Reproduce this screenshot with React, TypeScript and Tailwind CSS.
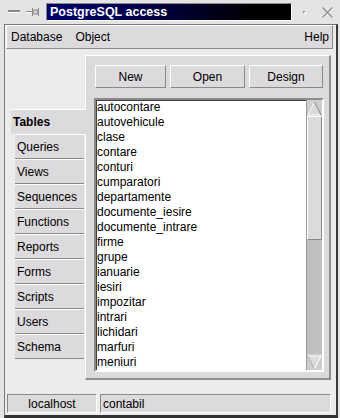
import React from "react";

const tables = [
  "autocontare",
  "autovehicule",
  "clase",
  "contare",
  "conturi",
  "cumparatori",
  "departamente",
  "documente_iesire",
  "documente_intrare",
  "firme",
  "grupe",
  "ianuarie",
  "iesiri",
  "impozitar",
  "intrari",
  "lichidari",
  "marfuri",
  "meniuri",
];

const tabs = ["Queries", "Views", "Sequences", "Functions", "Reports", "Forms", "Scripts", "Users", "Schema"];

const raised = "bg-[#dcdadc] border border-t-white border-l-white border-b-[#8a8a8a] border-r-[#8a8a8a]";
const sunken = "bg-[#dcdadc] border border-t-[#8a8a8a] border-l-[#8a8a8a] border-b-white border-r-white";

const App = () => {
  return (
    <div className="w-[340px] h-[418px] bg-[#e4e4e4] flex flex-col overflow-hidden font-['Liberation_Sans',Arial,sans-serif] text-[12px] text-black">
      {/* Title bar */}
      <div className="h-[24px] shrink-0 flex items-center pl-[8px]">
        <svg width="12" height="4" viewBox="0 0 12 4">
          <rect x="0" y="0" width="12" height="2" fill="#8a8a8a" />
          <rect x="0" y="2" width="12" height="1" fill="#ffffff" />
        </svg>
        <svg className="ml-[6px]" width="14" height="10" viewBox="0 0 14 10">
          <rect x="0" y="4" width="6" height="1" fill="#8a8a8a" />
          <rect x="0" y="5" width="6" height="1" fill="#ffffff" />
          <rect x="6" y="1" width="1" height="8" fill="#8a8a8a" />
          <rect x="7" y="3" width="5" height="4" fill="#cfcfcf" stroke="#8a8a8a" strokeWidth="1" />
          <rect x="12" y="1" width="1" height="8" fill="#8a8a8a" />
        </svg>
        <div className="ml-[6px] w-[246px] h-[18px] flex items-center pl-[3px] border border-t-[#8a8a8a] border-l-[#8a8a8a] border-b-white border-r-white bg-[linear-gradient(to_right,#00006e,#000048_40%,#000_85%)]">
          <span className="text-white font-bold text-[12.5px] leading-none">PostgreSQL access</span>
        </div>
        <svg className="ml-[11px]" width="3" height="3" viewBox="0 0 3 3">
          <rect x="0" y="0" width="2" height="2" fill="#8a8a8a" />
          <rect x="1" y="1" width="2" height="2" fill="#ffffff" opacity="0.8" />
        </svg>
        <svg className="ml-[15px]" width="13" height="12" viewBox="0 0 13 12">
          <path d="M1.5 1.5 L11.5 11.5 M11.5 1.5 L1.5 11.5" stroke="#ffffff" strokeWidth="1.2" transform="translate(0.6 0.6)" />
          <path d="M1.5 1.5 L11.5 11.5 M11.5 1.5 L1.5 11.5" stroke="#8a8a8a" strokeWidth="1.2" />
        </svg>
      </div>

      {/* Window body */}
      <div className="flex-1 ml-[4px] mr-[2px] flex flex-col bg-[#ececec] border border-[#7a7a7a] border-r-2 border-r-[#3a3a3a] border-b-[3px] border-b-[#333]">
        {/* Menu bar */}
        <div className={`h-[24px] shrink-0 ml-[1px] mr-[3px] flex items-center pl-[4px] pr-[3px] ${raised}`}>
          <span>Database</span>
          <span className="ml-[13px]">Object</span>
          <span className="ml-auto">Help</span>
        </div>

        {/* Main area */}
        <div className="flex-1 flex pt-[6px] pl-[6px] pr-[5px]">
          {/* Tabs */}
          <div className="w-[74px] shrink-0 flex flex-col pt-[54px]">
            <div className="relative z-10 h-[25px] w-[75px] -mr-[1px] bg-[#dcdadc] border-t border-t-white flex items-center pl-[2px] font-bold">
              Tables
            </div>
            <div className="ml-[4px] w-[69px] flex flex-col">
              {tabs.map((t) => (
                <div
                  key={t}
                  className="h-[25px] bg-[#dcdadc] border-t border-t-white border-b border-b-[#8a8a8a] flex items-center pl-[2px]"
                >
                  {t}
                </div>
              ))}
            </div>
          </div>

          {/* Panel */}
          <div className="flex-1 h-[325px] bg-[#dcdadc] border border-t-white border-l-white border-r-2 border-b-2 border-r-[#8f8f8f] border-b-[#8f8f8f] pt-[9px] pl-[8px] flex flex-col">
            <div className="flex gap-[4px] pl-[1px]">
              <button className={`w-[71px] h-[23px] ${raised}`}>New</button>
              <button className={`w-[75px] h-[23px] ${raised}`}>Open</button>
              <button className={`w-[74px] h-[23px] ${raised}`}>Design</button>
            </div>

            {/* List box */}
            <div className="mt-[10px] w-[230px] h-[274px] bg-white border-2 border-t-[#8a8a8a] border-l-[#8a8a8a] border-b-white border-r-white shadow-[inset_1px_1px_0_#404040] flex">
              <div className="flex-1 overflow-hidden pl-[1px] pt-[0px]">
                {tables.map((t) => (
                  <div key={t} className="leading-[15px] h-[15px] whitespace-nowrap">
                    {t}
                  </div>
                ))}
              </div>

              {/* Scrollbar */}
              <div className="w-[16px] flex flex-col border-l border-l-[#9a9a9a] bg-[#bfbfbf]">
                <div className="h-[16px] bg-[#cfcdcf] flex items-center justify-center">
                  <svg width="15" height="15" viewBox="0 0 15 15">
                    <path d="M7.5 1 L1 14 L14 14 Z" fill="#dcdadc" />
                    <path d="M7.5 1 L1 14" stroke="#ffffff" strokeWidth="1" />
                    <path d="M1 14 L14 14" stroke="#ffffff" strokeWidth="1" />
                    <path d="M7.5 1 L14 14" stroke="#8a8a8a" strokeWidth="1" />
                  </svg>
                </div>
                <div className={`h-[124px] ${raised}`} />
                <div className="flex-1" />
                <div className="h-[16px] bg-[#cfcdcf] flex items-center justify-center">
                  <svg width="15" height="15" viewBox="0 0 15 15">
                    <path d="M1 1 L14 1 L7.5 14 Z" fill="#dcdadc" />
                    <path d="M1 1 L14 1" stroke="#ffffff" strokeWidth="1" />
                    <path d="M1 1 L7.5 14" stroke="#8a8a8a" strokeWidth="1" strokeDasharray="1 1" />
                    <path d="M14 1 L7.5 14" stroke="#ffffff" strokeWidth="1" />
                  </svg>
                </div>
              </div>
            </div>
          </div>
        </div>

        {/* Status bar */}
        <div className="h-[25px] shrink-0 flex items-start pt-[4px] pl-[2px] gap-[3px]">
          <div className={`w-[90px] h-[19px] flex items-center justify-center ${sunken}`}>localhost</div>
          <div className={`w-[231px] h-[19px] flex items-center pl-[2px] ${sunken}`}>contabil</div>
        </div>
      </div>
    </div>
  );
};

export default App;
